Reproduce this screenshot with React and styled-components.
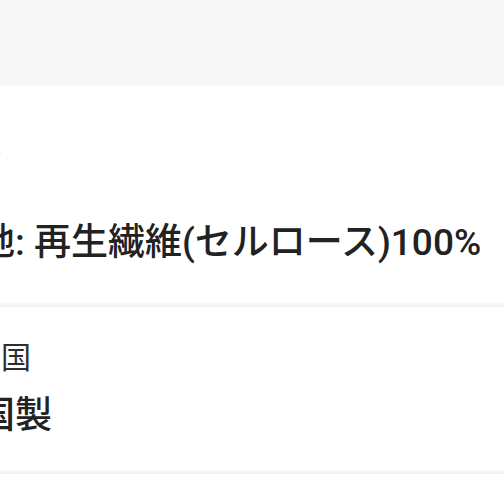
import React from "react";
import styled, { createGlobalStyle } from "styled-components";

const Global = createGlobalStyle`
  html, body { margin: 0; padding: 0; background: #ffffff; overflow: hidden; }
  body { width: 504px; height: 504px; font-family: Roboto, "Noto Sans CJK JP", sans-serif; }
`;

const Page = styled.div`
  display: flex;
  flex-direction: column;
  width: 504px;
  height: 504px;
  overflow: hidden;
  background: #ffffff;
`;

const Header = styled.div`
  height: 84px;
  flex: none;
  background: #f7f7f7;
  box-shadow: 0 1px 3px rgba(0, 0, 0, 0.06);
  position: relative;
  z-index: 1;
`;

const Section = styled.section`
  display: flex;
  flex-direction: column;
  gap: ${(p) => p.$gap}px;
  padding: ${(p) => p.$top}px 0 ${(p) => p.$bottom}px;
  margin-left: -59px;
  background: #ffffff;
`;

const Label = styled.div`
  font-size: 30px;
  line-height: 40px;
  color: #2e2e2e;
  white-space: nowrap;
`;

const Value = styled.div`
  font-size: 37px;
  line-height: 48px;
  font-weight: 500;
  color: #222222;
  white-space: nowrap;
`;

const Divider = styled.div`
  height: ${(p) => p.$h}px;
  flex: none;
  background: linear-gradient(#fbfbfb, #efefef);
`;

const rows = [
  { label: "素材", value: "生地: 再生繊維(セルロース)100%", top: 56, gap: 39, bottom: 36 },
  { label: "原産国", value: "中国製", top: 31, gap: 14, bottom: 30 },
];

export default function App() {
  return (
    <Page>
      <Global />
      <Header />
      {rows.map((r) => (
        <React.Fragment key={r.label}>
          <Section $top={r.top} $gap={r.gap} $bottom={r.bottom}>
            <Label>{r.label}</Label>
            <Value>{r.value}</Value>
          </Section>
          <Divider $h={4} />
        </React.Fragment>
      ))}
    </Page>
  );
}
